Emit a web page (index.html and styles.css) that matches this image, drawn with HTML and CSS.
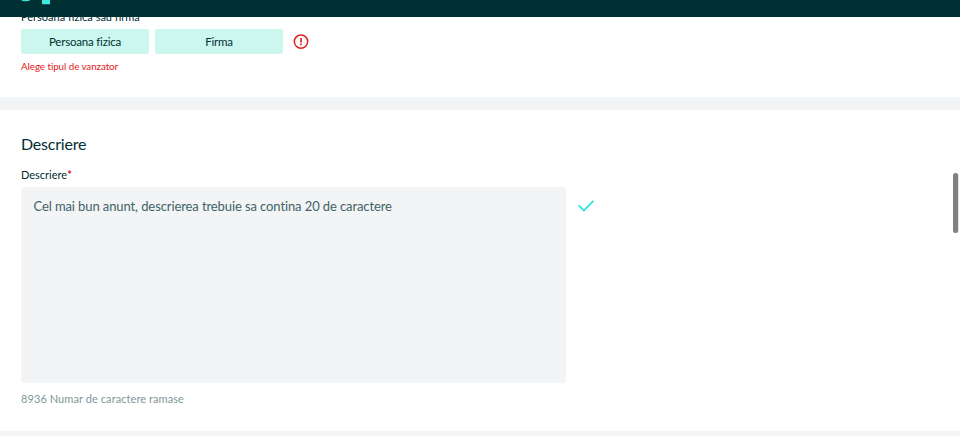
FILE: index.html
```html
<!DOCTYPE html>
<html lang="ro">
<head>
<meta charset="utf-8">
<title>Descriere</title>
<link rel="stylesheet" href="styles.css">
</head>
<body>
<header class="topbar">
  <svg class="logo" width="36" height="5" viewBox="0 0 36 5"><path d="M5 0h9.500q-1.500 1.200-4.800 1.200T5 0zM26 0h8v4.200h-8z" fill="#3ae8de"/></svg>
</header>
<main class="page">
  <section class="card seller">
    <div class="label seller-label">Persoana fizica sau firma</div>
    <div class="options">
      <button class="option">Persoana fizica</button>
      <button class="option">Firma</button>
      <svg class="warning" width="16" height="16" viewBox="0 0 16 16"><circle cx="8" cy="7.600" r="6.700" fill="none" stroke="#e02020" stroke-width="1.500"/><path d="M8 4v4.500M8 9.600v1.600" stroke="#e02020" stroke-width="1.700"/></svg>
    </div>
    <div class="error">Alege tipul de vanzator</div>
  </section>
  <section class="card description">
    <h2 class="title">Descriere</h2>
    <label class="label" for="desc">Descriere<span class="required">*</span></label>
    <div class="field">
      <div class="textarea" id="desc">Cel mai bun anunt, descrierea trebuie sa contina 20 de caractere</div>
      <svg class="check" width="16" height="12" viewBox="0 0 16 12"><path d="M.7 5.300l5.200 5.200L15.300.9" fill="none" stroke="#23e5db" stroke-width="1.700"/></svg>
    </div>
    <div class="counter">8936 Numar de caractere ramase</div>
  </section>
</main>
<div class="scrollbar"></div>
</body>
</html>
```
FILE: styles.css
```css
* { box-sizing: border-box; }
body {
  margin: 0;
  height: 436px;
  overflow: hidden;
  background: #f2f4f5;
  color: #002f34;
  font-family: Lato, "Open Sans", sans-serif;
  font-variant-ligatures: none;
}
.topbar {
  position: fixed;
  top: 0;
  left: 0;
  right: 0;
  height: 17px;
  background: #002f34;
  z-index: 2;
}
.logo { display: block; margin-left: 16px; }
.page { display: flex; flex-direction: column; gap: 13px; }
.card { background: #fff; padding-left: 21px; }
.seller { height: 97px; padding-top: 9px; }
.label { display: block; font-size: 11px; line-height: 16px; white-space: nowrap; }
.seller-label { height: 20px; }
.options { display: flex; align-items: center; gap: 6px; }
.option {
  width: 128px;
  height: 25px;
  padding: 0;
  border: 0;
  border-radius: 2px;
  background: #cbf7ee;
  color: #002f34;
  font-family: inherit;
  font-size: 11.500px;
  line-height: 25px;
  letter-spacing: -0.200px;
  font-variant-ligatures: none;
}
.warning { margin-left: 4px; }
.error { margin-top: 4px; font-size: 9.800px; line-height: 16px; letter-spacing: -0.060px; color: #e02020; }
.description { height: 321px; padding-top: 22px; }
.title { margin: 0; font-size: 16px; line-height: 24px; font-weight: 400; letter-spacing: -0.220px; }
.description .label { margin-top: 11px; }
.required { color: #d81b2b; font-weight: 700; }
.field { display: flex; gap: 12px; margin-top: 4px; }
.textarea {
  width: 545px;
  height: 196px;
  padding: 10px 12.500px;
  border-radius: 3px;
  background: #f2f4f5;
  color: #406367;
  font-size: 13px;
  line-height: 19px;
  letter-spacing: -0.100px;
  white-space: nowrap;
}
.check { margin-top: 13px; }
.counter { margin-top: 7px; font-size: 11px; line-height: 18px; letter-spacing: 0.080px; color: #7f9799; }
.scrollbar {
  position: fixed;
  top: 173px;
  right: 2px;
  width: 5px;
  height: 60px;
  border-radius: 3px;
  background: #808080;
  box-shadow: 1px 0 #e2e2e2;
}
```
